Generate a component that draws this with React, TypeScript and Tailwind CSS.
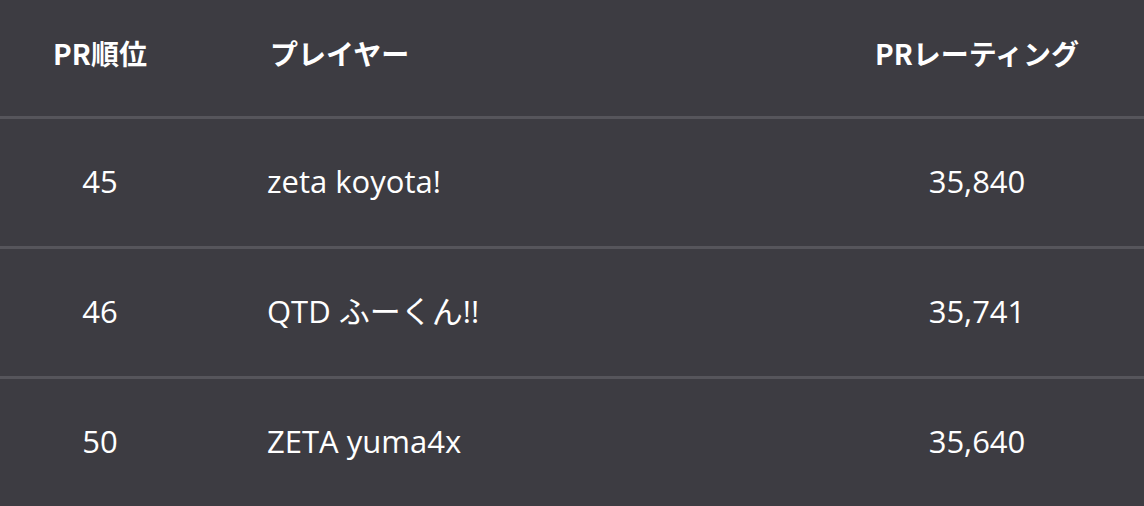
import type { ReactNode } from 'react';

const rows: { rank: string; player: ReactNode; rating: string }[] = [
  { rank: '45', player: 'zeta koyota!', rating: '35,840' },
  {
    rank: '46',
    player: (
      <>
        QTD <span className="font-normal">ふーくん!!</span>
      </>
    ),
    rating: '35,741',
  },
  { rank: '50', player: 'ZETA yuma4x', rating: '35,640' },
];

export default function App() {
  return (
    <div className="w-[1144px] h-[506px] bg-[#3d3c42] text-white overflow-hidden">
      <div
        className="grid grid-cols-[200px_610px_334px] h-[116px] items-center pb-[10px] text-[28px] font-bold"
        style={{ fontFamily: '"Noto Sans CJK JP", "Noto Sans", sans-serif' }}
      >
        <div className="text-center">PR順位</div>
        <div className="pl-[70px]">プレイヤー</div>
        <div className="text-center">PRレーティング</div>
      </div>
      {rows.map((row) => (
        <div
          key={row.rank}
          className="grid grid-cols-[200px_610px_334px] h-[130px] items-center pb-[2px] border-t-[3px] border-[#56555b] text-[31px] font-medium"
          style={{ fontFamily: '"Open Sans", "Noto Sans CJK JP", sans-serif' }}
        >
          <div className="text-center">{row.rank}</div>
          <div className="pl-[67px]">{row.player}</div>
          <div className="text-center">{row.rating}</div>
        </div>
      ))}
    </div>
  );
}
